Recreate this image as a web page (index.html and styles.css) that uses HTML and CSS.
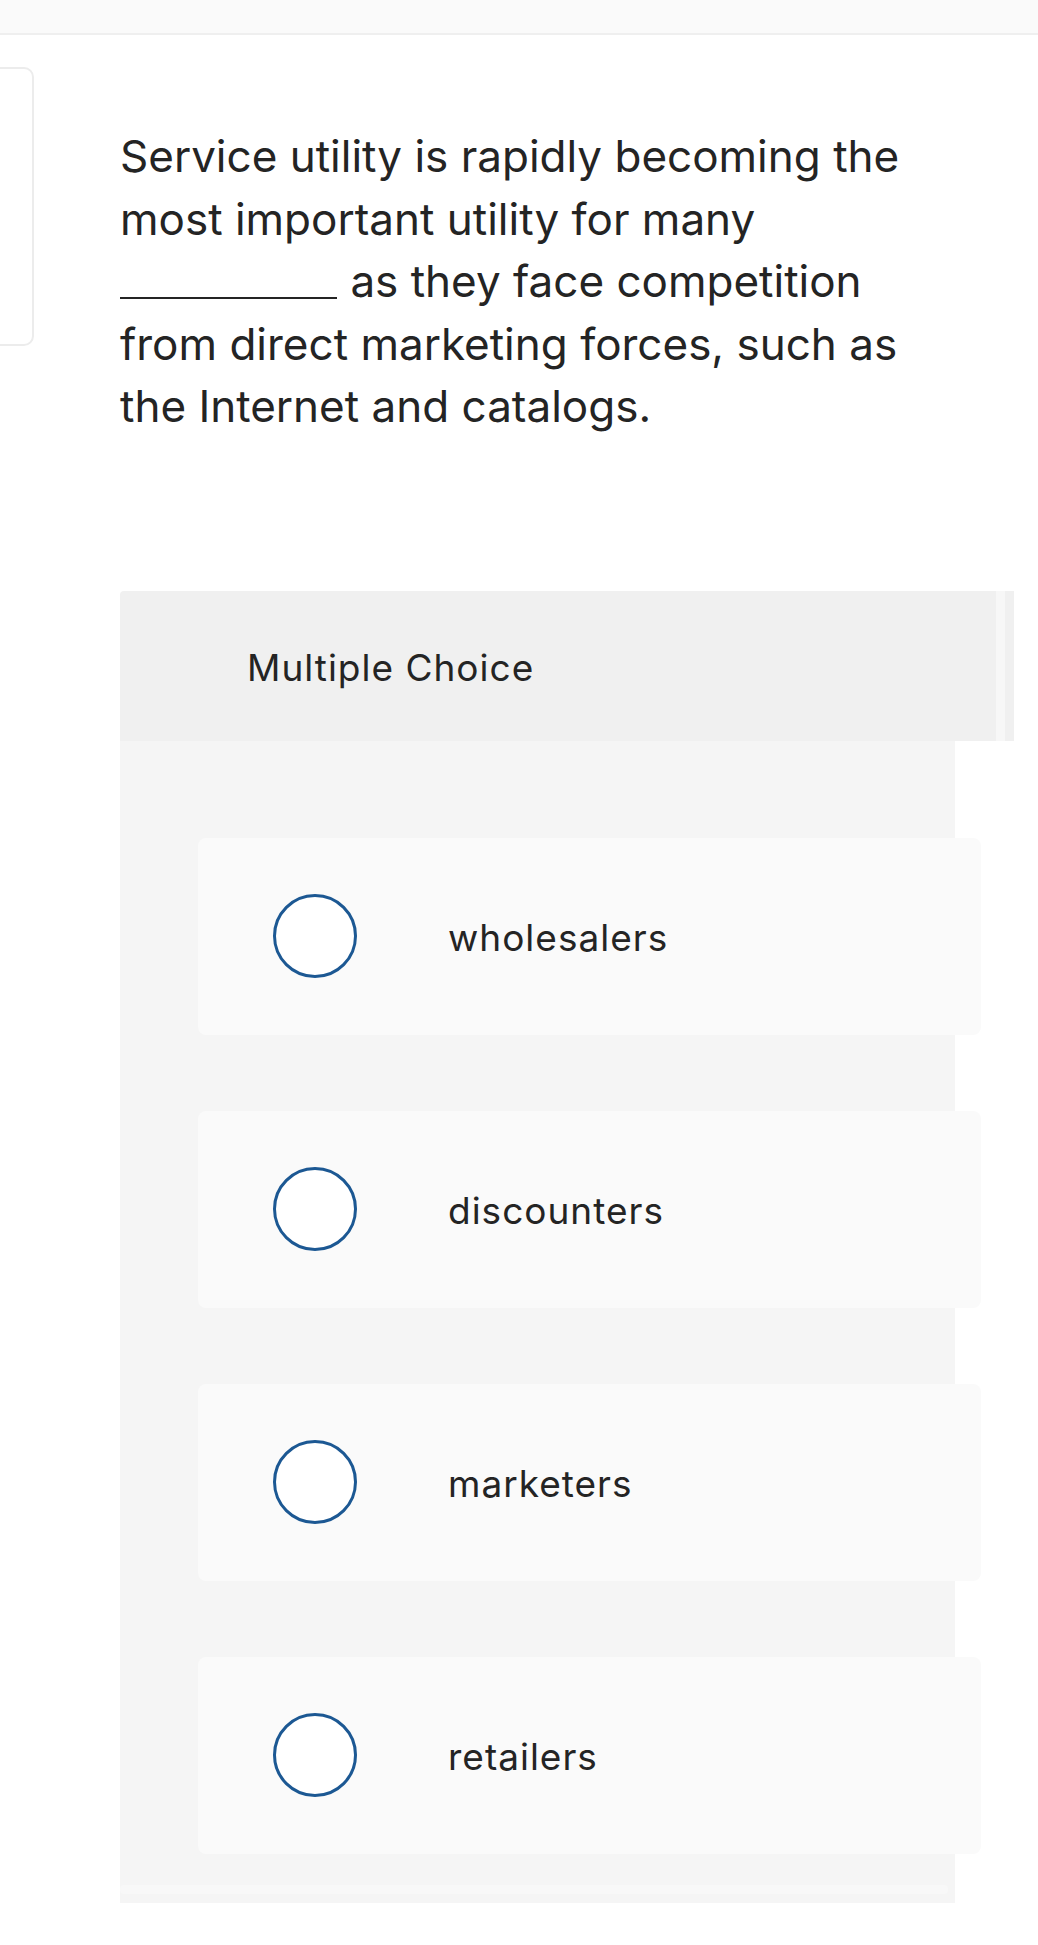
FILE: index.html
```html
<!DOCTYPE html>
<html>
<head>
<meta charset="utf-8">
<link rel="stylesheet" href="styles.css">
</head>
<body>
<div class="topbar"></div>
<div class="page">
  <div class="side"></div>
  <main class="content">
    <p class="question">Service utility is rapidly becoming the<br>most important utility for many<br><span class="blank"></span> as they face competition<br>from direct marketing forces, such as<br>the Internet and catalogs.</p>
    <section class="mc">
      <div class="mc-head">
        <div class="mc-title">Multiple Choice</div>
        <div class="mc-strip"></div>
        <div class="mc-edge"></div>
      </div>
      <div class="mc-body">
        <div class="option"><span class="radio"></span><span class="label">wholesalers</span></div>
        <div class="option"><span class="radio"></span><span class="label">discounters</span></div>
        <div class="option"><span class="radio"></span><span class="label">marketers</span></div>
        <div class="option"><span class="radio"></span><span class="label">retailers</span></div>
        <div class="mc-foot"></div>
      </div>
    </section>
  </main>
</div>
</body>
</html>
```
FILE: styles.css
```css
* { box-sizing: border-box; }
html, body { margin: 0; padding: 0; background: #ffffff; }
body { font-family: "Inter", "Lato", sans-serif; color: #242424; width: 1038px; overflow: hidden; }

.topbar { height: 35px; background: #fafafa; border-bottom: 2px solid #efefef; }

.page { display: flex; align-items: flex-start; }

.side {
  flex: none;
  width: 44px;
  height: 279px;
  margin-left: -10px;
  margin-top: 32px;
  border: 2px solid #ececec;
  border-radius: 10px;
  background: #fff;
}

.content { flex: none; margin-left: 86px; width: 894px; }

.question {
  margin: 90px 0 0 0;
  font-size: 44px;
  line-height: 62.6px;
  color: #242424;
  white-space: nowrap;
}
.blank {
  display: inline-block;
  width: 217px;
  height: 2px;
  background: #242424;
  vertical-align: -2px;
  margin-right: 1px;
}

.mc { margin-top: 153px; }

.mc-head { display: flex; height: 150px; }
.mc-title {
  width: 876px;
  background: #f0f0f0;
  border-top-left-radius: 4px;
  padding-left: 127px;
  padding-top: 46px;
  font-size: 37px;
  letter-spacing: 1px;
  line-height: 62px;
  color: #242424;
}
.mc-strip { width: 9px; background: #f7f7f7; }
.mc-edge { width: 9px; background: #f0f0f0; }

.mc-body {
  width: 835px;
  background: #f5f5f5;
  padding: 97px 0 9px 78px;
  display: flex;
  flex-direction: column;
  gap: 76px;
}

.option {
  width: 783px;
  height: 197px;
  background: #fafafa;
  border-radius: 8px;
  display: flex;
  align-items: center;
  padding-left: 75px;
}
.radio {
  flex: none;
  width: 84px;
  height: 84px;
  border: 3px solid #1c5893;
  border-radius: 50%;
  background: #ffffff;
}
.label {
  margin-left: 91px;
  font-size: 37px;
  letter-spacing: 1px;
  color: #242424;
  position: relative;
  top: 1px;
}

.mc-foot {
  margin-top: -45px;
  width: 828px;
  margin-left: -78px;
  height: 9px;
  background: #f8f8f8;
  border-radius: 4px;
}
```
